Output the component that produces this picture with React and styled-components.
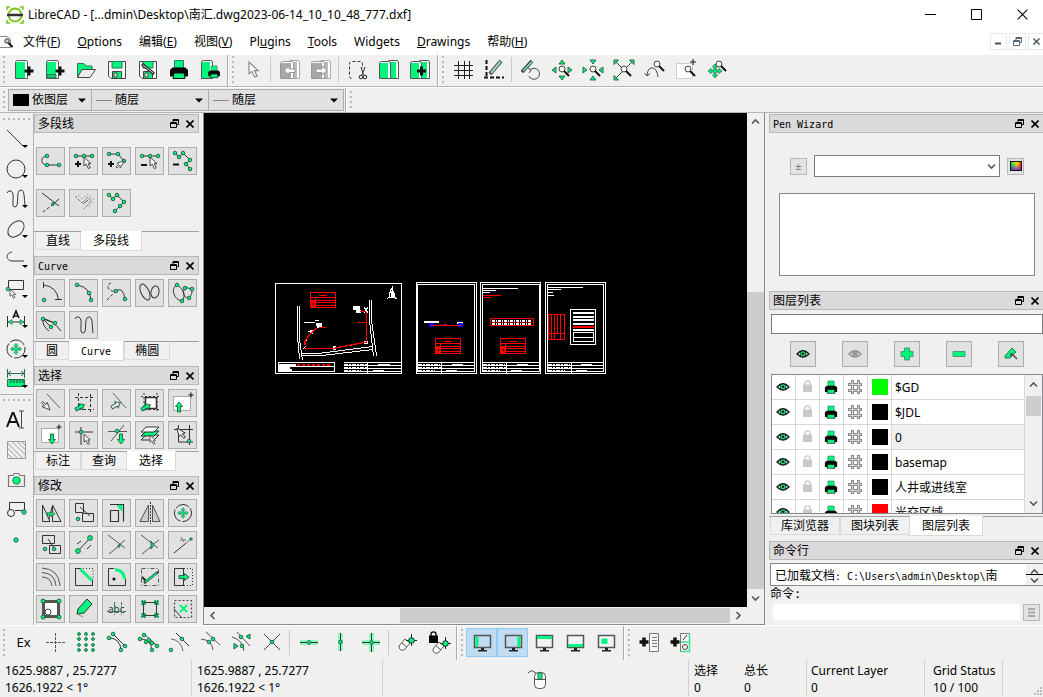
import { useState } from 'react';
import styled, { createGlobalStyle } from 'styled-components';

const GREEN = '#00f57c';
const INK = '#333';
const MONO = '"DejaVu Sans Mono", "Noto Sans CJK SC", monospace';

const GlobalStyle = createGlobalStyle`
    * { box-sizing: border-box; }
    body {
        margin: 0;
        background: #f0f0f0;
        color: #000;
        font: 12px/17px "Noto Sans", "Noto Sans CJK SC", sans-serif;
    }
    button, input, select { font: inherit; color: inherit; padding: 0; margin: 0; border-radius: 0; }
    svg { display: block; flex: none; }
`

/* ---------- icon helpers ---------- */

const Line = ({ d, c = INK, w = 1, f = 'none', dash }) =>
    <path d={d} stroke={c} strokeWidth={w} fill={f} strokeDasharray={dash} />

const Dots = ({ at, r = 1.8 }) => at.map(([x, y]) =>
    <circle key={`${x}-${y}`} cx={x} cy={y} r={r} fill={GREEN} stroke="#1d5c3c" strokeWidth="0.9" />)

const Cursor = ({ x, y, turn = 0, f = '#f4f4f4', c = INK, s = 1 }) => (
    <g transform={`translate(${x} ${y}) rotate(${turn}) scale(${s})`}>
        <path d="M0 0V9L2.2 7.2L4.4 11.6L6.2 10.7L4.2 6.6H7Z" fill={f} stroke={c} strokeWidth="0.9" />
    </g>
)

const Arrow = ({ x, y, turn = 0, f = GREEN, s = 1 }) => (
    <g transform={`translate(${x} ${y}) rotate(${turn}) scale(${s})`}>
        <path d="M0 -5L3.5 -0.5H1.5V5H-1.5V-0.5H-3.5Z" fill={f} stroke="#225c40" strokeWidth="0.9" />
    </g>
)

const Lens = ({ x = 14, y = 13, r = 3 }) => (
    <>
        <circle cx={x} cy={y} r={r} fill="#f8f8f8" stroke="#444" />
        <path d={`M${x + 2} ${y + 2}L${x + 7} ${y + 7}`} stroke="#111" strokeWidth="2" />
    </>
)

const Plus = ({ x, y, r = 3, w = 2, c = '#111' }) =>
    <path d={`M${x - r} ${y}H${x + r}M${x} ${y - r}V${y + r}`} stroke={c} strokeWidth={w} />

const FourWay = ({ x = 14, y = 14, s = 1 }) => (
    <g transform={`translate(${x} ${y}) scale(${s})`}>
        <path d="M0 -7L2.5 -4H1V-1H4V-2.5L7 0L4 2.5V1H1V4H2.5L0 7L-2.5 4H-1V1H-4V2.5L-7 0L-4 -2.5V-1H-1V-4H-2.5Z" fill={GREEN} stroke="#27835a" strokeWidth="0.9" />
    </g>
)

const Monitor = ({ children, f = '#f3f3f3' }) => (
    <>
        <path d="M6.500 7.500H22.500V19.500H6.500Z" fill={f} stroke="#555" strokeWidth="1.500" />
        {children}
        <path d="M13 20H16V22H19V23.500H10V22H13Z" fill="#222" />
    </>
)

/* sheet with a coloured face and a white turned edge */
const Page = ({ x = 5, y = 4, w = 13, f = GREEN, c = '#555' }) => (
    <>
        <path d={`M${x + 0.5} ${y + 2.5}Q${x + 0.5} ${y + 0.5} ${x + 2.5} ${y + 0.5}H${x + w - 2}Q${x + w - 0.5} ${y + 0.5} ${x + w - 0.5} ${y + 3}V22.500H${x + 0.5}Z`} fill="#fff" stroke={c} />
        <path d={`M${x + 1} ${y + 2}H${x + w - 3}V22H${x + 1}Z`} fill={f} />
    </>
)

const Floppy = () => (
    <>
        <path d="M5.500 5.500H22.500V22.500H8L5.500 20Z" fill="#f8f8f8" stroke="#444" />
        <path d="M9 5.500H19V12H9Z" fill={GREEN} stroke="#2b7d55" />
        <path d="M9.500 15.500H18.500V22.500H9.500Z" fill={GREEN} stroke="#444" />
        <path d="M11 17H14V21H11Z" fill="#eee" stroke="#444" />
    </>
)

const Printer = ({ x = 0, y = 0, s = 1 }) => (
    <g transform={`translate(${x} ${y}) scale(${s})`}>
        <path d="M9.500 4.500H18.500V12H9.500Z" fill={GREEN} stroke="#218455" />
        <path d="M5 14L7.500 11.500H20.500L23 14V20.500H5Z" fill="#080808" />
        <path d="M9 17H19L20 22.500H8Z" fill={GREEN} stroke="#111" />
    </g>
)

const Eraser = ({ x = 0, y = 0 }) => (
    <g transform={`translate(${x} ${y})`}>
        <path d="M4 18L10 11L15 15L9 22Q4 23 4 18Z" fill="#fff" stroke="#555" />
        <path d="M7 15L12 19" stroke="#555" />
        <path d="M16.500 6V18M11 12.500H22" stroke="#222" />
        <circle cx="16.500" cy="12.500" r="2.800" fill={GREEN} stroke="#222" />
    </g>
)

const Lock = ({ x = 0, y = 0, f = '#050505' }) => (
    <g transform={`translate(${x} ${y})`}>
        <path d="M2 5V3Q2 0.800 4.500 0.800Q7 0.800 7 3V5" fill="none" stroke={f} strokeWidth="1.300" />
        <path d="M0 4.500H9V12H0Z" fill={f} />
    </g>
)

const Eye = ({ f = GREEN, c = '#151515' }) => (
    <>
        <path d="M8 14Q14 7.500 20 14Q14 20 8 14Z" fill="#fff" stroke={c} strokeWidth="1.300" />
        <circle cx="14" cy="13.800" r="2.900" fill={f} stroke={c} strokeWidth="0.800" />
        <circle cx="14" cy="13.800" r="1.200" fill={c} />
    </>
)

const icons = {
    // file
    newDoc: <><Page x={5} /><Plus x={19} y={15} r={4.5} w={3} /></>,
    newTpl: <><Page x={5} /><Line d="M6 18.500H15V22H6Z" f="#19c873" c="#1b6b45" w={0.8} /><Plus x={19} y={15} r={4.5} w={3} /></>,
    open: <><Line d="M5.500 21.500V7.500H12L14 10H20V13" f={GREEN} c="#277a52" /><Line d="M5.500 21.500L10 13.500H23.500L18 21.500Z" f="#eee" c="#444" /></>,
    save: <Floppy />,
    saveAs: <><Floppy /><Line d="M8 8L20 18" c="#333" w={3} /><Line d="M9 9L19 17" c="#bcd" /></>,
    print: <Printer />,
    preview: <><Page x={5} w={12} /><Printer x={9} y={7} s={0.65} /></>,
    // edit
    pointer: <Cursor x={10} y={6} f="#fff" c="#888" s={1.3} />,
    undo: <><Page x={12} w={12} f="#bbb" c="#aaa" /><Page x={4} y={5} w={14} f="#a8a8a8" c="#999" /><Line d="M8 14.500L13 10V13H19V16.500H13V19Z" f="#fff" c="#999" /></>,
    redo: <><Page x={12} w={12} f="#bbb" c="#aaa" /><Page x={4} y={5} w={14} f="#a8a8a8" c="#999" /><Line d="M20 14.500L15 10V13H9V16.500H15V19Z" f="#fff" c="#999" /></>,
    cut: <><Line d="M7.500 22.500Q5.500 22.500 5.500 20V8Q5.500 5.500 8 5.500H16Q18.500 5.500 18.500 8V12" dash="3 2" /><Line d="M17 11L19.500 19M21 11L18 19" /><circle cx="17" cy="21" r="1.800" fill="none" stroke="#222" /><circle cx="21" cy="21" r="1.800" fill="none" stroke="#222" /></>,
    copy: <><Page x={12} w={12} /><Page x={4} y={5} w={12} /></>,
    paste: <><Page x={12} w={12} /><Page x={4} y={5} w={12} /><Plus x={15.5} y={15} r={4.5} w={3} /></>,
    // view
    grid: <Line d="M9.500 5V23M15.500 5V23M20.500 5V23M5 9.500H24M5 14.500H24M5 19.500H24" c="#222" />,
    draft: <><Line d="M6.500 4V20" c="#111" w={2} dash="4 2" /><Line d="M4 21.500H24" c="#111" w={2} dash="4 2" /><Line d="M10 18L21 5" c="#444" w={4} /><Line d="M11 17L20.500 5.500" c="#9fd8b8" w={2} /></>,
    redraw: <><Line d="M5 16L15 5" c="#333" w={3.4} /><Line d="M6 15L15 5.500" c="#7de6ae" w={1.8} /><path d="M13 14A5.500 5.500 0 1 1 12 20M11 12L14 14L12 17" fill="none" stroke="#444" /></>,
    zoomIn: <><Line d="M14 4L17 8H11ZM14 24L17 20H11ZM4 14L8 11V17ZM24 14L20 11V17Z" f={GREEN} c="#225c40" w={0.9} /><Lens /></>,
    zoomOut: <><Line d="M14 8L17 4H11ZM14 20L17 24H11ZM8 14L4 11V17ZM20 14L24 11V17Z" f={GREEN} c="#225c40" w={0.9} /><Lens /></>,
    zoomAuto: <><Line d="M6 6L12 12M22 6L16 12M6 22L12 16" /><Line d="M4 4H8.500L4 8.500ZM24 4H19.500L24 8.500ZM4 24H8.500L4 19.500Z" f={GREEN} c="#225c40" w={0.9} /><Lens /></>,
    zoomPrev: <><Lens x={16} y={8} /><Line d="M6 19Q7 11 12 12Q16 13 17 21M3.500 17L6 20L9 17.500" c="#444" /></>,
    zoomWin: <><Line d="M4.500 7.500H20.500V22.500H4.500Z" f="#fff" c="#ccc" /><Plus x={21} y={6} r={3} w={1} /><Lens x={16} y={13} /></>,
    pan: <><FourWay x={12} y={15} /><Lens x={16} y={8} /></>,
    // left tool column
    tLine: <Line d="M5 5L21 21" />,
    tCircle: <circle cx="14" cy="14" r="9" fill="none" stroke={INK} />,
    tSpline: <Line d="M5 8Q6 5 9 6C14 9 8 22 13 22C18 22 13 5 19 5C23 5 22 15 23 20" />,
    tEllipse: <ellipse cx="14" cy="14" rx="9.500" ry="6.500" transform="rotate(-45 14 14)" fill="none" stroke={INK} />,
    tArc: <Line d="M10 7C2 9 5 16 10 16H22" />,
    tSelect: <><Line d="M6.500 5.500H21.500V14.500H6.500Z" /><Dots at={[[6, 14]]} /><Cursor x={8} y={14} s={0.8} /></>,
    tDim: <><Line d="M5.500 11V22M22.500 11V22M6 17H22" /><Line d="M6 17L10 14.500V19.500ZM22 17L18 14.500V19.500Z" f={GREEN} c="#277a52" w={0.7} /><Line d="M11 13L14 6L17 13M12 11H16" c="#111" w={1.5} /></>,
    tMove: <><circle cx="14" cy="14" r="9" fill="none" stroke={INK} strokeDasharray="16 2" /><FourWay s={0.8} /></>,
    tRuler: <><Line d="M5.500 4V13M22.500 4V13M6 8.500H22M9 6L6 8.500L9 11M19 6L22 8.500L19 11" c="#236e4a" /><Line d="M5.500 14.500H22.500V21.500H5.500Z" f={GREEN} c="#237249" /><Line d="M9 15V18M12 15V18M15 15V18M18 15V18M21 15V18" /></>,
    tText: <><Line d="M5 21L10.500 7H11.500L17 21M7 16H15" c="#111" w={2} /><Line d="M17 5H19.500V22H17M19.500 5H22M19.500 22H22" c="#444" /></>,
    tHatch: <Line d="M5.500 5.500H23.500V22.500H5.500ZM5.500 17.500L10.500 22.500M5.500 12L16 22.500M5.500 7L21 22.500M10 5.500L23.500 19M15 5.500L23.500 14M19.500 5.500L23.500 9.500" c="#999" />,
    tCamera: <><Line d="M6.500 9.500H11L12 7.500H17L18 9.500H22.500V20.500H6.500Z" f="#eee" c="#777" w={1.2} /><circle cx="14.500" cy="14.500" r="3.800" fill={GREEN} stroke="#2d8058" /></>,
    tBlock: <><Line d="M7.500 14V6.500H22.500V14.500H13" /><circle cx="9" cy="17" r="3.500" fill="none" stroke={INK} /><Dots at={[[22, 16]]} r={2.2} /></>,
    tPoint: <Dots at={[[14, 14]]} r={2.2} />,
    // polyline dock
    plDraw: <><Line d="M10 9C3 9 3 18 10 18H22" /><Dots at={[[10, 9], [10, 18], [22, 18]]} /></>,
    plAdd: <><Line d="M6 9H22" /><Dots at={[[6, 9], [14, 9], [22, 9]]} /><Plus x={8} y={17} /><Cursor x={14} y={10} /></>,
    plAppend: <><Line d="M6 7H15L21 14" /><Dots at={[[6, 7], [15, 7], [21, 14]]} /><Plus x={8} y={17} /><Cursor x={21} y={14} turn={75} s={0.8} /></>,
    plDel: <><Line d="M6 9H22" /><Dots at={[[6, 9], [14, 9], [22, 9]]} /><Line d="M5 18H11" c="#111" w={2} /><Cursor x={14} y={10} /></>,
    plDelB: <><Line d="M6 6L10 10L14 6L21 13L17 17L21 22" /><Dots at={[[6, 6], [10, 10], [14, 6], [21, 13], [17, 17], [21, 22]]} /><Line d="M4 17.500H10" c="#111" w={2} /></>,
    plTrim: <><Line d="M5 4L22 17" /><Line d="M6 23L14 17" dash="3 2" /><Line d="M14 17L22 10" /><Dots at={[[16, 15]]} r={1.4} /></>,
    plPara: <><Line d="M5 7L12 14L18 8L21 12L14 20" c="#777" dash="3 1" /><Line d="M8 6L12 10L18 5L24 11L18 19" c="#999" dash="2 2" /><Line d="M13 15L18 11" c="#555" /></>,
    plSeg: <><Line d="M6 6L10 10L14 6L21 13L12 22" /><Dots at={[[6, 6], [10, 10], [14, 6], [21, 13], [17, 17], [12, 22]]} /></>,
    // curve dock
    cArc: <><Line d="M7 6Q20 8 21.500 20.500M6.500 3V9M18 20.500H25" /><Dots at={[[7, 21]]} /></>,
    c3p: <><Line d="M7 6Q20 8 21 21" /><Dots at={[[7, 6], [19, 14], [21, 21]]} /></>,
    cTan: <><Line d="M8 4Q3 6 6 10Q9 13 13 12M4 21L13 12" dash="3 2" /><Line d="M13 12Q20 7 22 20" /><Dots at={[[13, 12], [22, 20]]} /></>,
    cRings: <><ellipse cx="9" cy="13" rx="4" ry="8.500" transform="rotate(-25 9 13)" fill="none" stroke={INK} /><ellipse cx="19" cy="13" rx="4" ry="6" transform="rotate(10 19 13)" fill="none" stroke={INK} /></>,
    cRingDots: <><Line d="M8 6C1 9 5 21 13 22C18 17 13 8 8 6ZM16 9C12 15 17 20 20 19C26 12 22 8 16 9Z" /><Dots at={[[8, 6], [16, 9], [23, 10], [20, 19], [13, 22]]} /></>,
    cFan: <><Line d="M6 8Q5 15 12 20M6 8Q15 8 24 20M6 8L14 16M6 8L18 12" /><Dots at={[[6, 8], [18, 12], [14, 16]]} /></>,
    cSpline: <Line d="M5 8Q6 5 9 6C14 9 8 22 13 22C18 22 13 6 19 6C23 6 22 16 23 22" />,
    // select dock
    sEntity: <><Line d="M10 5L23 19" c="#666" /><Cursor x={13} y={21} turn={160} s={0.9} /></>,
    sWin: <><Line d="M8.500 4V20M20.500 5V24M5 8.500H24M8 20.500H24" dash="3 2" /><Arrow x={10} y={18} turn={60} /></>,
    sContour: <><Line d="M10 4L23 19" c="#666" /><Arrow x={13} y={16} turn={60} f="#eee" /></>,
    sWinSolid: <><Line d="M8 4V24M21 4V24M5 7.500H24M5 20.500H24" dash="2 2" /><Line d="M9.500 8.500H20.500V19.500H9.500Z" f="#fff" w={1.5} /><Arrow x={10} y={18} turn={60} /></>,
    sUp: <><Line d="M4.500 7.500H21.500V21.500H4.500Z" f="#fff" c="#aaa" /><Plus x={22} y={6} r={2.5} w={1} /><Arrow x={10} y={18} /></>,
    sDown: <><Line d="M4.500 7.500H21.500V21.500H4.500Z" f="#fff" c="#aaa" /><Plus x={22} y={6} r={2.5} w={1} /><Arrow x={15} y={18} turn={180} /></>,
    sCross: <><Line d="M5 11H23M11 6V24" /><Dots at={[[11, 11]]} /><Cursor x={14} y={13} s={0.9} /></>,
    sCrossDown: <><Line d="M5 10.500H24M21 4L8 20" c="#555" /><Dots at={[[14, 10]]} /><Arrow x={18} y={18} turn={180} /></>,
    sLayer: <><Line d="M5 19L10 14L23 14L18 19Z" f="#ddd" /><Line d="M5 15L10 10H23L18 15Z" f={GREEN} /><Line d="M5 11L10 6H23L18 11Z" f="#fff" /><Cursor x={14} y={14} s={0.8} /></>,
    sInvert: <><Line d="M9.500 4V21H24M20.500 4V24M5 8.500H24" /><Cursor x={8} y={7} s={1} turn={-12} /><Dots at={[[20, 20]]} /></>,
    // modify dock
    mMove: <><Line d="M5.500 6V22.500H13ZM15.500 6V22.500H24ZM15 8L12 20" /><Arrow x={14} y={15} turn={90} s={0.8} /></>,
    mCopy: <><Line d="M5.500 4.500H13.500V13.500H5.500ZM12.500 14.500H23.500V22.500H12.500ZM10 8L20 17" /><Dots at={[[8, 20]]} /></>,
    mScale: <><Line d="M7 5.500H20.500V22.500M7.500 11.500H15.500V22.500H7.500Z" w={1.2} /><Line d="M14 6.500H19V12Z" f={GREEN} c={GREEN} /></>,
    mMirror: <><Line d="M4 22.500L12.500 6V22.500ZM24 22.500L16.500 6V22.500Z" f="#ccc" c="#555" /><Line d="M14.500 3V25" dash="2 1" /></>,
    mRotate: <><circle cx="14" cy="14" r="8.500" fill="none" stroke={INK} strokeDasharray="14 2" /><FourWay s={0.75} /></>,
    mMoveRot: <><Line d="M5.500 4.500H17.500V12.500H5.500ZM12.500 14.500H23.500V22.500H12.500ZM11 8L17 17" /><Dots at={[[8, 18], [17, 18]]} /></>,
    mStretch: <><Line d="M8 20L20 7M7 13L11 10M21 14L17 18" /><Dots at={[[20, 7], [8, 20]]} r={2.4} /></>,
    mTrim: <><Line d="M5 4L22 17M16 14L22 9M6 23L16 15" c="#555" /><Dots at={[[16, 15]]} r={1.2} /></>,
    mTrim2: <><Line d="M5 4L22 17M16 14L23 9M6 23L16 15" c="#555" /><Line d="M15 10V18L18 14Z" f={GREEN} c="#225c40" w={0.9} /></>,
    mExtend: <><Line d="M5 22L16 13" /><Line d="M16 13L23 7" dash="2 1" /><Line d="M11 9H17M12 6L15 11" c="#777" /><Dots at={[[22, 8]]} r={1.2} /></>,
    mOffset: <Line d="M5 5Q22 6 23 23M5 9.500Q18 10 19 23M5 14Q14 14 15 23" c="#555" />,
    mBevel: <><Line d="M5.500 5V22.500H23M5 5.500H10M22.500 17V23" /><Line d="M10 5.500H23V17" dash="1 2" /><Line d="M10 6L22 17.500" c={GREEN} w={3} /></>,
    mFillet: <><Line d="M11 5.500H5.500V22.500H22.500V16" /><Line d="M12 6.500Q21 7 21.500 16" c={GREEN} w={3} /><circle cx="11" cy="16" r="1.600" fill="#111" /></>,
    mDivide: <><Line d="M5.500 5.500H22.500V22.500H5.500Z" dash="4 2 1 2" c="#555" /><Line d="M6 14L11 19M8 20L22 9" c="#333" w={2.4} /><Line d="M9 19L21 10" c={GREEN} w={1.5} /></>,
    mStretchBox: <><Line d="M14.500 5.500H5.500V22.500H14.500" /><Line d="M15 5.500H23.500V22.500H14.500" dash="1 2" /><Line d="M14.500 5V23" /><Arrow x={15} y={14} turn={90} /></>,
    mProps: <><Line d="M6.500 6.500H21.500V21.500H6.500Z" f="#fff" c="#555" w={3} /><circle cx="11" cy="17" r="3" fill="#fff" stroke="#444" /><Dots at={[[6, 6], [22, 6], [6, 22], [22, 22]]} r={2} /></>,
    mAttr: <><Line d="M8 14L17 4L22 9L14 18L7 19Z" f={GREEN} c="#333" /><Line d="M7 19L13 22" c="#888" /></>,
    mText: <><text x="5" y="18" fontSize="10" fill="#333">abc</text><Line d="M4 16.500H24M11.500 7V20M18.500 7V20" c="#387b5c" dash="3 1" /></>,
    mBlock: <><Line d="M7.500 7.500H20.500V20.500H7.500Z" /><Line d="M5.500 5.500L9.500 9.500M9.500 5.500L5.500 9.500M18.500 5.500L22.500 9.500M22.500 5.500L18.500 9.500M5.500 18.500L9.500 22.500M9.500 18.500L5.500 22.500M18.500 18.500L22.500 22.500M22.500 18.500L18.500 22.500" c="#07904d" w={1.8} /></>,
    mDelete: <><Line d="M5.500 5.500H22.500V22.500H5.500Z" dash="2 2" c="#444" w={1.2} /><Line d="M11 10L18 17M18 10L11 17" c={GREEN} w={2} /><Line d="M5 14L13 23" /></>,
    // snap bar
    sFree: <Line d="M14.500 5V24M5 14.500H24" dash="3 1" c="#555" />,
    sGrid: <Dots r={1.4} at={[7, 14, 21].flatMap(x => [6, 11, 17, 22].map(y => [x, y]))} />,
    sEnd: <><Line d="M10 6L22 18M6 10Q17 10 18 22" /><Dots at={[[10, 6], [22, 18], [6, 10], [18, 22]]} /></>,
    sOn: <><Line d="M10 6L23 18M6 11Q17 10 18 23" /><Dots at={[[10, 7], [15, 12], [18, 15], [23, 18], [6, 11], [12, 14], [18, 22]]} /></>,
    sCenter: <><Line d="M11 5L24 18" /><Line d="M6 11Q16 12 18 23" c="#666" /><Dots at={[[17, 11], [6, 22]]} /></>,
    sMid: <><Line d="M10 4L24 17M5 11Q16 12 17 22" c="#555" /><Dots at={[[17, 11], [13, 14]]} /></>,
    sDist: <><Line d="M10 4L23 18M5 9Q16 12 17 23" c="#555" /><Dots at={[[14, 9], [15, 18]]} /><Line d="M23 6V11L19 8.500ZM7 15.500V21L11 18Z" f={GREEN} c="#225c40" /></>,
    sInter: <><Line d="M6 6L22 22M22 6L6 22" c="#444" /><Dots at={[[14, 14]]} /></>,
    rHor: <><Line d="M5 14.500H23" c="#8df7c0" w={5} /><Line d="M5 14.500H23" /><Dots at={[[14, 14.5]]} /></>,
    rVer: <><Line d="M14.500 5V23" c="#8df7c0" w={5} /><Line d="M14.500 5V23" /><Dots at={[[14.5, 14]]} /></>,
    rOrt: <><Line d="M5 14.500H23M14.500 5V24" c="#8df7c0" w={5} /><Line d="M5 14.500H23M14.500 5V24" /><Dots at={[[14.5, 14.5]]} /></>,
    relZero: <Eraser x={1} />,
    lockZero: <><Eraser x={4} y={3} /><Lock x={4} y={3} /></>,
    dLeft: <Monitor f="none"><Line d="M9 8.500V18.500" c={GREEN} w={3} /></Monitor>,
    dRight: <Monitor f="none"><Line d="M20 8.500V18.500" c={GREEN} w={3} /></Monitor>,
    dTop: <Monitor><Line d="M7 9.500H22" c={GREEN} w={3} /></Monitor>,
    dBottom: <Monitor><Line d="M7 17.500H22" c={GREEN} w={3} /></Monitor>,
    dFloat: <Monitor><Line d="M10 11H15V15.500H10Z" c={GREEN} f={GREEN} /></Monitor>,
    addList: <><Plus x={9} y={14} r={4.5} w={3.5} /><Line d="M14.500 5.500H23.500V23.500H14.500ZM17 9.500H22M17 12.500H22M17 15.500H22M17 18.500H22" f="#f5f5f5" c="#777" /></>,
    addShapes: <><Plus x={9} y={14} r={4.5} w={3.5} /><Line d="M14.500 5.500H23.500V23.500H14.500Z" f="#f5f5f5" c="#777" /><Line d="M23.500 6V23.500H15M15 14H23" c="#39e58c" w={1.5} /><Line d="M17 12L21 7" /><circle cx="19" cy="19" r="2.500" fill="none" stroke="#444" /></>,
    // layer list
    eye: <Eye />,
    eyeOff: <Eye f="#aaa" c="#8c8c8c" />,
    add: <Line d="M11.500 8H16.500V11.500H20V16.500H16.500V20H11.500V16.500H8V11.500H11.500Z" f={GREEN} c="#4a9b76" />,
    remove: <Line d="M8 11.500H20V16.500H8Z" f={GREEN} c="#4a9b76" />,
    modify: <><Line d="M8 16L15 8L19 12L13 18H8Z" f={GREEN} c="#267b50" /><Line d="M14 13L20 19M14 13V17" c="#555" w={1.6} /></>,
    lock: <Lock x={10} y={7} f="#c8c8c8" />,
    printer: <Printer x={4.5} y={5} s={0.68} />,
    hash: <><Line d="M11.500 7V21M17.500 7V21M7 11.500H21M7 17.500H21" c="#8a8a8a" w={3} /><Line d="M11.500 8V20M17.500 8V20M8 11.500H20M8 17.500H20" c="#d4d4d4" w={1} /></>,
    mouse: <><Line d="M4 8Q8 4 10 7T16 7" c="#444" /><rect x="10.500" y="7.500" width="11" height="16" rx="4" fill="#fafafa" stroke="#555" /><Line d="M14 8H18V14H14Z" f={GREEN} c="#2b8157" /><Line d="M11 14.500H21" c="#555" /></>,
}

const Icon = ({ name }) => (
    <svg width="28" height="28" viewBox="0 0 28 28" aria-hidden="true">{icons[name]}</svg>
)

/* ---------- window frame ---------- */

const Window = styled.div`
    display: flex;
    flex-direction: column;
    height: 100vh;
    overflow: hidden;
`

const TitleBar = styled.header`
    display: flex;
    align-items: center;
    height: 29px;
    padding-left: 6px;
    gap: 4px;
    background: #fff;
`

const WindowTitle = styled.h1`
    flex: 1;
    margin: 0;
    font-size: 12px;
    font-weight: 400;
    white-space: nowrap;
`

const FrameButton = styled.button`
    display: flex;
    align-items: center;
    justify-content: center;
    width: ${props => props.$small ? 17 : 42}px;
    height: ${props => props.$small ? 17 : 28}px;
    border: ${props => props.$small ? '1px solid #e8e8e8' : 0};
    background: #fff;
`

const FrameButtons = styled.div`
    display: flex;
    gap: ${props => props.$small ? 2 : 4}px;
    margin-right: ${props => props.$small ? -2 : 0}px;
`

const MenuBar = styled.nav`
    display: flex;
    align-items: center;
    height: 25px;
    background: #fff;
`

const MenuItems = styled.div`
    display: flex;
    flex: 1;
    gap: 17px;
    padding-left: 9px;
`

const MenuItem = styled.button`
    border: 0;
    background: none;
    white-space: nowrap;
`

/* ---------- toolbars ---------- */

const ToolRow = styled.div`
    display: flex;
    flex: none;
    height: ${props => props.$height}px;
    border-top: 1px solid #fff;
    border-bottom: ${props => props.$flat ? 0 : '1px solid #b4b4b4'};
`

const ToolGroup = styled.div`
    display: flex;
    align-items: center;
    padding: 0 2px ${props => props.$tight ? 0 : 2}px 0;
    border-right: ${props => props.$last ? 0 : '1px solid #aaa'};
    box-shadow: ${props => props.$last ? 'none' : '1px 0 #fff'};
    margin-right: 1px;
`

const Grip = styled.div`
    flex: none;
    width: 2px;
    height: ${props => props.$short ? 19 : 27}px;
    margin: 0 3px;
    background: repeating-linear-gradient(#b8b8b8 0 2px, transparent 2px 5px);
`

const GripAcross = styled.div`
    flex: none;
    width: 27px;
    height: 2px;
    margin: 4px 3px;
    background: repeating-linear-gradient(90deg, #b8b8b8 0 2px, transparent 2px 5px);
`

const ToolButton = styled.button`
    display: flex;
    align-items: center;
    justify-content: center;
    width: 31px;
    height: 29px;
    border: 1px solid ${props => props.$on ? '#90c8f6' : 'transparent'};
    background: ${props => props.$on ? '#c0dcf3' : 'none'};
    font-size: 13px;
`

const ToolDivider = styled.div`
    width: 1px;
    height: 25px;
    margin: 0 3px 0 2px;
    background: #c8c8c8;
`

const PenBox = styled.label`
    display: flex;
    align-items: center;
    width: ${props => props.$width}px;
    height: 22px;
    margin-right: -1px;
    padding: 0 5px 0 4px;
    gap: 2px;
    border: 1px solid #adadad;
    background: #e1e1e1;
`

const PenSwatch = styled.span`
    width: 16px;
    height: ${props => props.$line ? 1 : 12}px;
    background: ${props => props.$line ? '#888' : '#000'};
`

const PenSelect = styled.select`
    flex: 1;
    min-width: 0;
    padding-left: 1px;
    border: 0;
    appearance: none;
    background: none;
    font: 12px/17px ${MONO};
`

/* ---------- main area ---------- */

const Main = styled.main`
    display: flex;
    flex: 1;
    min-height: 0;
`

const SideTools = styled.div`
    display: flex;
    flex-direction: column;
    flex: none;
    width: 34px;
    padding-top: 1px;
    border-right: 1px solid #b4b4b4;
`

const SideButton = styled.button`
    position: relative;
    display: flex;
    align-items: center;
    justify-content: center;
    height: 30px;
    padding-right: 1px;
    border: 0;
    background: none;
`

const DropMark = styled.span`
    position: absolute;
    right: 5px;
    bottom: 6px;
    border: 3px solid transparent;
    border-top-color: #000;
    border-bottom: 0;
`

const SideRule = styled.div`
    height: 1px;
    background: #b4b4b4;
`

const LeftDocks = styled.div`
    flex: none;
    width: 165px;
    padding-top: 1px;
`

const DockHeader = styled.header`
    display: flex;
    flex: none;
    align-items: center;
    height: 19px;
    padding-left: 3px;
    border: 1px solid #b8b8b8;
    background: #dadada;
`

const RightDocks = styled.div`
    display: flex;
    flex-direction: column;
    flex: none;
    width: 274px;
    margin-left: 4px;
    padding-top: 1px;

    ${DockHeader} { border-right: 0; }
`

const DockTitle = styled.h2`
    flex: 1;
    margin: 0;
    padding-top: 2px;
    font: ${props => props.$latin ? 10 : 12}px/17px ${MONO};
`

const DockButton = styled.button`
    display: flex;
    width: 16px;
    height: 16px;
    align-items: center;
    justify-content: center;
    border: 0;
    background: none;
`

const ButtonGrid = styled.div`
    display: grid;
    grid-template-columns: repeat(5, 29px);
    grid-auto-rows: 28px;
    gap: ${props => props.$gap}px 4px;
    padding: ${props => props.$gap}px 2px ${props => props.$gap === 4 ? 2 : props.$gap}px;
`

const GridButton = styled.button`
    display: flex;
    align-items: center;
    justify-content: center;
    border: 1px solid #adadad;
    background: #e1e1e1;
`

const TabBar = styled.div`
    display: flex;
    flex: none;
    height: 19px;
    margin-bottom: 6px;
    padding-left: 1px;
    border-top: 1px solid #a0a0a0;
`

const Tab = styled.button`
    height: ${props => props.$active ? 20 : 18}px;
    margin-top: ${props => props.$active ? -1 : 0}px;
    padding: 1px ${props => props.$active ? 12 : 10}px 0;
    border: 1px solid #d9d9d9;
    border-top: 0;
    border-left-width: ${props => props.$active ? 0 : 1}px;
    background: ${props => props.$active ? '#fff' : '#f0f0f0'};
    font: ${props => props.$latin ? 10 : 12}px/17px ${MONO};
    white-space: nowrap;
`

const Viewport = styled.section`
    display: grid;
    flex: 1;
    grid-template: 1fr 17px / 1fr 17px;
    min-width: 0;
    margin-left: 4px;
    border: 1px solid #828790;
    border-width: 0 1px 1px;
    background: #f0f0f0;
`

const Drawing = styled.svg`
    width: 100%;
    height: 100%;
    min-height: 0;
    background: #000;
`

const ScrollTrack = styled.div`
    display: flex;
    flex-direction: ${props => props.$vertical ? 'column' : 'row'};
    align-items: center;
    justify-content: space-between;
    padding: ${props => props.$vertical ? '4px 0' : '0 4px'};
    min-height: 0;
    background: ${props => props.$vertical
        ? 'linear-gradient(#cdcdcd, #cdcdcd) center 91% / 100% 297px no-repeat'
        : 'linear-gradient(#cdcdcd, #cdcdcd) 92% center / 330px 15px no-repeat'} #f0f0f0;
`

/* ---------- right docks ---------- */

const PenWizard = styled.div`
    display: flex;
    flex: none;
    flex-direction: column;
    gap: 16px;
    height: 158px;
    padding: 22px 8px 15px 10px;
`

const WizardRow = styled.div`
    display: flex;
    align-items: center;
    gap: 7px;
    padding: 0 11px;
`

const MiniButton = styled.button`
    display: flex;
    flex: none;
    align-items: center;
    justify-content: center;
    width: 17px;
    height: 17px;
    border: 1px solid #b8b8b8;
    background: #e3e3e3;
    color: #777;
    font-size: 11px;
    line-height: 12px;
`

const ComboShell = styled.label`
    display: flex;
    flex: 1;
    align-items: center;
    height: 22px;
    padding-right: 3px;
    border: 1px solid #7a7a7a;
    background: #fff;
`

const PlainSelect = styled.select`
    flex: 1;
    height: 100%;
    border: 0;
    appearance: none;
    background: none;
`

const Swatch = styled.span`
    width: 12px;
    height: 10px;
    border: 1px solid #111;
    background: linear-gradient(transparent 20%, rgba(90, 0, 255, 0.7)), linear-gradient(90deg, #00e05a, #ffe600 60%, #f30);
`

const FavoriteList = styled.div`
    flex: 1;
    border: 1px solid #828790;
    background: #fff;
`

const FilterInput = styled.input`
    flex: none;
    height: 20px;
    margin: 4px 0 7px 2px;
    border: 1px solid #7a7a7a;
    background: #fff;
`

const LayerActions = styled.div`
    display: flex;
    flex: none;
    justify-content: space-between;
    padding: 0 19px 7px 21px;
`

const ActionButton = styled.button`
    display: flex;
    align-items: center;
    justify-content: center;
    width: 26px;
    height: 26px;
    border: 1px solid #adadad;
    background: #e1e1e1;
`

const LayerBox = styled.div`
    display: flex;
    flex: 1;
    min-height: 0;
    margin: 0 0 2px 2px;
    border: 1px solid #828790;
    background: #fff;
    overflow: hidden;
`

const LayerTable = styled.table`
    flex: 1;
    width: 100%;
    min-width: 0;
    height: 150px;
    border-spacing: 0;
    table-layout: fixed;
`

const LayerCell = styled.td`
    width: ${props => props.$name ? 'auto' : '24px'};
    height: 25px;
    padding: 0 0 0 ${props => props.$name ? 3 : 0}px;
    border: solid #d8d8d8;
    border-width: 0 1px 1px 0;
    background: ${props => props.$current ? '#f0f0f0' : '#fff'};
    overflow: hidden;
    white-space: nowrap;

    svg { margin: -2px -3px; }
`

const ColorChip = styled.span`
    display: block;
    width: 16px;
    height: 16px;
    margin: 0 auto;
    background: ${props => props.$color};
`

const LayerScroll = styled.div`
    display: flex;
    flex: none;
    flex-direction: column;
    align-items: center;
    justify-content: space-between;
    width: 17px;
    padding: 5px 0;
    background: linear-gradient(#cdcdcd, #cdcdcd) 1px 21px / 15px 20px no-repeat #f0f0f0;
`

const LogBox = styled.div`
    display: flex;
    flex: none;
    height: 23px;
    margin: 3px 0 0 1px;
    padding-left: 4px;
    border: 1px solid #828790;
    border-right: 0;
    background: #fff;
    overflow: hidden;
`

const LogText = styled.p`
    flex: 1;
    margin: 0;
    padding-top: 4px;
    font: 12px/17px ${MONO};
    white-space: nowrap;
`

const Latin = styled.span`
    font-size: 10px;
`

const LogScroll = styled.div`
    display: flex;
    flex-direction: column;
    align-items: center;
    justify-content: space-between;
    width: 17px;
    padding: 3px 0 0;
    background: linear-gradient(#000, #000) 0 10px / 17px 1px no-repeat #f0f0f0;
`

const CommandLabel = styled.label`
    flex: none;
    height: 18px;
    padding-left: 1px;
    font: 12px/16px ${MONO};
`

const CommandRow = styled.div`
    display: flex;
    flex: none;
    gap: 3px;
    margin-bottom: 4px;
    padding: 0 3px 0 4px;
`

const CommandInput = styled.input`
    flex: 1;
    min-width: 0;
    height: 16px;
    border: 0;
    background: #fff;
`

/* ---------- status bar ---------- */

const StatusBar = styled.footer`
    display: flex;
    flex: none;
    align-items: stretch;
    height: 37px;
    padding-bottom: 1px;
`

const StatusCell = styled.div`
    display: flex;
    flex: ${props => props.$width ? `0 0 ${props.$width}px` : '1'};
    justify-content: ${props => props.$width ? 'flex-start' : 'center'};
    align-items: ${props => props.$width ? 'flex-start' : 'center'};
    padding-top: 2px;
    padding-left: ${props => props.$pad ?? 5}px;
    border-right: 1px solid #d0d0d0;
    white-space: nowrap;
`

const StatusText = styled.div`
    min-width: 50px;
    white-space: pre-line;
`

const SizeGrip = styled.div`
    display: flex;
    flex: 0 0 40px;
    align-items: flex-end;
    justify-content: flex-end;
`

/* ---------- small glyphs ---------- */

const Chevron = ({ turn = 0 }) => (
    <svg width="9" height="9" viewBox="0 0 9 9">
        <path d="M1 2.500L4.500 6L8 2.500" transform={`rotate(${turn} 4.500 4.500)`} fill="none" stroke="#555" strokeWidth="1.600" />
    </svg>
)

const Triangle = () => (
    <svg width="8" height="5" viewBox="0 0 8 5"><path d="M0 0.500H8L4 4.500Z" fill="#000" /></svg>
)

const RestoreGlyph = ({ c = '#000' }) => (
    <svg width="9" height="9" viewBox="0 0 9 9">
        <path d="M3 3V0.500H8.500V5.500H6.500M3 1.500H8.500" fill="none" stroke={c} />
        <path d="M0.500 3.500H6.500V8.500H0.500ZM0.500 4.500H6.500" fill="none" stroke={c} />
    </svg>
)

const CloseGlyph = ({ size = 8, w = 1.6, c = '#000' }) => (
    <svg width={size} height={size} viewBox="0 0 8 8">
        <path d="M0.500 0.500L7.500 7.500M7.500 0.500L0.500 7.500" stroke={c} strokeWidth={w} />
    </svg>
)

const Logo = () => (
    <svg width="18" height="18" viewBox="0 0 18 18">
        <circle cx="9" cy="9" r="6.500" fill="#fff" stroke="#7bc618" strokeWidth="2" />
        <path d="M1 4V1H4M14 1H17V4M1 14V17H4M14 17H17V14" fill="none" stroke="#7bc618" strokeWidth="1.500" />
        <path d="M1 9H17" stroke="#333" strokeWidth="2.500" />
    </svg>
)

const DocGlyph = () => (
    <svg width="14" height="14" viewBox="0 0 14 14">
        <path d="M0 1.500H7L10.500 4.500V12.500H0" fill="#fff" stroke="#888" />
        <circle cx="7" cy="6" r="2.200" fill="#ccc" stroke="#333" />
        <path d="M8.500 8L12.500 12" stroke="#111" strokeWidth="2" />
    </svg>
)

/* ---------- data ---------- */

const menus = [
    ['文件(', 'F', ')'], ['', 'O', 'ptions'], ['编辑(', 'E', ')'], ['视图(', 'V', ')'], ['Pl', 'u', 'gins'],
    ['', 'T', 'ools'], ['Widgets', '', ''], ['', 'D', 'rawings'], ['帮助(', 'H', ')'],
]

const topGroups = [
    ['newDoc', 'newTpl', 'open', 'save', 'saveAs', 'print', 'preview'],
    ['pointer', '|', 'undo', 'redo', '|', 'cut', 'copy', 'paste'],
    ['grid', 'draft', '|', 'redraw', 'zoomIn', 'zoomOut', 'zoomAuto', 'zoomPrev', 'zoomWin', 'pan'],
]

const bottomGroups = [
    ['Ex', 'sFree', 'sGrid', 'sEnd', 'sOn', 'sCenter', 'sMid', 'sDist', 'sInter', '|', 'rHor', 'rVer', 'rOrt', '|', 'relZero', 'lockZero'],
    ['dLeft', 'dRight', 'dTop', 'dBottom', 'dFloat'],
    ['addList', 'addShapes'],
]

const sideTools = ['tLine', 'tCircle', 'tSpline', 'tEllipse', 'tArc', 'tSelect', 'tDim', 'tMove', 'tRuler']
const sideExtras = ['tText', 'tHatch', 'tCamera', 'tBlock', 'tPoint']

const docks = [
    {
        title: '多段线', gap: 14, tabs: ['直线', '多段线'], active: 1,
        tools: ['plDraw', 'plAdd', 'plAppend', 'plDel', 'plDelB', 'plTrim', 'plPara', 'plSeg'],
    },
    {
        title: 'Curve', gap: 4, tabs: ['圆', 'Curve', '椭圆'], active: 1,
        tools: ['cArc', 'c3p', 'cTan', 'cRings', 'cRingDots', 'cFan', 'cSpline'],
    },
    {
        title: '选择', gap: 4, tabs: ['标注', '查询', '选择'], active: 2,
        tools: ['sEntity', 'sWin', 'sContour', 'sWinSolid', 'sUp', 'sDown', 'sCross', 'sCrossDown', 'sLayer', 'sInvert'],
    },
    {
        title: '修改', gap: 4, tabs: [],
        tools: ['mMove', 'mCopy', 'mScale', 'mMirror', 'mRotate', 'mMoveRot', 'mStretch', 'mTrim', 'mTrim2', 'mExtend',
            'mOffset', 'mBevel', 'mFillet', 'mDivide', 'mStretchBox', 'mProps', 'mAttr', 'mText', 'mBlock', 'mDelete'],
    },
]

const layers = [
    { name: '$GD', color: '#00ff00' },
    { name: '$JDL', color: '#000' },
    { name: '0', color: '#000' },
    { name: 'basemap', color: '#000' },
    { name: '人井或进线室', color: '#000' },
    { name: '光交区域', color: '#ff0000' },
]

/* ---------- pieces ---------- */

const isLatin = text => /^[\x00-\x7f]+$/.test(text)

const Tools = ({ groups }) => groups.map((group, i) => (
    <ToolGroup key={i} $last={i === groups.length - 1}>
        <Grip />
        {group.map((name, n) => name === '|'
            ? <ToolDivider key={n} />
            : <ToolButton key={n} type="button" $on={name === 'dLeft' || name === 'dRight'} aria-label={name}>
                {name === 'Ex' ? 'Ex' : <Icon name={name} />}
            </ToolButton>)}
    </ToolGroup>
))

const Header = ({ title }) => (
    <DockHeader>
        <DockTitle $latin={isLatin(title)}>{title}</DockTitle>
        <DockButton type="button" aria-label="float"><RestoreGlyph /></DockButton>
        <DockButton type="button" aria-label="close"><CloseGlyph /></DockButton>
    </DockHeader>
)

const Tabs = ({ tabs, start }) => {
    const [active, setActive] = useState(start);
    return (
        <TabBar>
            {tabs.map((tab, i) => (
                <Tab key={tab} type="button" $latin={isLatin(tab)} $active={active === i} onClick={() => setActive(i)}>{tab}</Tab>
            ))}
        </TabBar>
    )
}

const TitleBlock = ({ x, w }) => (
    <g>
        <path d={`M${x} 362.500H${x + w}M${x} 365.500H${x + w}M${x} 368.500H${x + w}M${x} 371.500H${x + w}M${x + w * 0.42} 362V373`} stroke="#fff" fill="none" />
        <path d={`M${x} 364H${x + w * 0.4}M${x} 367H${x + w * 0.42}M${x} 370H${x + w * 0.3}`} stroke="#fff" strokeDasharray="4 1 2 1" />
        <path d={`M${x + w * 0.6} 364H${x + w * 0.8}M${x + w * 0.5} 370H${x + w * 0.7}`} stroke="#fff" />
    </g>
)

const RedTable = ({ x, y }) => (
    <g stroke="#f00" fill="none">
        <path d={`M${x + 0.5} ${y + 0.5}h25v15h-25zM${x} ${y + 5.5}h26M${x} ${y + 8.5}h26M${x} ${y + 10.5}h26M${x} ${y + 13.5}h26M${x + 5.5} ${y + 5}v10`} />
        <path d={`M${x + 9} ${y + 3.5}h8M${x + 2} ${y + 9}h3v5h-3z`} strokeWidth="1.500" />
    </g>
)

const Plan = () => (
    <Drawing viewBox="204 113 543 494" preserveAspectRatio="xMidYMid meet" shapeRendering="crispEdges" role="img" aria-label="南汇">
        <g stroke="#fff" fill="none">
            <path d="M275.500 283.500H401.500V373.500H275.500Z" />
            <path d="M416.500 282.500H476.500V373.500H416.500ZM417.500 284.500H474.500V371.500H417.500Z" />
            <path d="M480.500 282.500H540.500V373.500H480.500ZM482.500 284.500H539.500V371.500H482.500Z" />
            <path d="M545.500 282.500H605.500V373.500H545.500ZM547.500 284.500H603.500V371.500H547.500Z" />
            <path d="M297.500 306V336L299.500 359M299.500 306V340L302.500 360M369.500 300V320L373.500 356M371.500 300V320L376.500 356" />
            <path d="M301 353.500H318L373 346.500M301 355.500H322L373 349.500" />
            <path d="M304 322.500H315M315 320.500H319M304 343L307 340M303 349L306 346M308 331H313" />
        </g>
        <path d="M316 323H322V328H317ZM353 306H360V310H353ZM356 310H361V313H356ZM310 330H313V334H310ZM333 346H336V350H333ZM364 341H368V344H364Z" fill="#fff" />
        <path d="M392.500 286V290L394.500 294V298M391.500 288L389.500 294V298M387 299L390 296M396.500 299L393 296M389 297.500H395M364 307L368 313M368 307L364 313" fill="none" stroke="#fff" />
        <path d="M392 289L394 293V297H391V293Z" fill="#fff" />
        <path d="M304 348.500H335M335 348L367 342M366.500 312V342M358 322.500H366M319 327.500H326M305 345V341L310 334L317 328M360 311.500H366" stroke="#f00" strokeWidth="1.300" fill="none" />
        <RedTable x={310} y={292} />
        <path d="M278.500 362.500H334.500V371.500H278.500ZM278 366.500H334" stroke="#fff" fill="none" />
        <path d="M279 365H296M279 368H290M279 370H292" stroke="#fff" strokeWidth="2" />
        <path d="M297 364.500H332" stroke="#f00" strokeWidth="2" strokeDasharray="3 2" />
        <TitleBlock x={344} w={57} />
        <TitleBlock x={418} w={56} />
        <TitleBlock x={483} w={56} />
        <TitleBlock x={548} w={55} />

        <path d="M424 322H439M457 322.500H463" stroke="#fff" strokeWidth="2" />
        <path d="M429 323H434V327H429ZM458 323H463V327H458Z" fill="#00f" />
        <path d="M431 325.500H461M444 324H447" stroke="#f00" fill="none" />
        <RedTable x={435} y={338} />

        <path d="M483 288.500H518M483 290.500H496M483 292.500H490M548 287.500H583M548 289.500H561M548 292.500H553M548 295.500H554" stroke="#fff" />
        <path d="M483 295.500H501M483 297.500H490" stroke="#f00" />
        <path d="M490.500 318.500H533.500V325.500H490.500Z" stroke="#f00" fill="none" />
        <path d="M492 320.500H532M492 323.500H532" stroke="#fff" strokeWidth="2" strokeDasharray="3 1 1 1" />
        <path d="M493 322H532" stroke="#f00" strokeDasharray="2 2" />
        <RedTable x={500} y={338} />

        <path d="M548.500 314.500H564.500V339.500H548.500ZM551.500 315V339M554.500 315V339M557.500 315V333M560.500 315V339M548 333.500H564" stroke="#f00" fill="none" />
        <path d="M570.500 309.500H595.500V344.500H570.500ZM573.500 332.500H593.500V341.500H573.500ZM573 337.500H593" stroke="#fff" fill="none" />
        <path d="M573 312.500H594M573 316.500H594M573 319.500H594M573 323.500H594M573 330H594" stroke="#fff" strokeWidth="2" />
        <path d="M573 326.500H594" stroke="#f00" strokeWidth="2" />
    </Drawing>
)

const App = () => {
    const [filter, setFilter] = useState('');
    const [command, setCommand] = useState('');

    const shown = layers.filter(layer => layer.name.includes(filter))

    return (
        <Window>
            <GlobalStyle />
            <TitleBar>
                <Logo />
                <WindowTitle>{'LibreCAD - [...dmin\\Desktop\\南汇.dwg2023-06-14_10_10_48_777.dxf]'}</WindowTitle>
                <FrameButtons>
                    <FrameButton type="button" aria-label="minimize"><svg width="11" height="11"><path d="M0 5.500H11" stroke="#000" /></svg></FrameButton>
                    <FrameButton type="button" aria-label="maximize"><svg width="11" height="11"><path d="M0.500 0.500H10.500V10.500H0.500Z" fill="none" stroke="#000" /></svg></FrameButton>
                    <FrameButton type="button" aria-label="close"><CloseGlyph size={11} w={0.8} /></FrameButton>
                </FrameButtons>
            </TitleBar>
            <MenuBar>
                <DocGlyph />
                <MenuItems>
                    {menus.map(([before, key, after]) => <MenuItem key={before + key} type="button">{before}<u>{key}</u>{after}</MenuItem>)}
                </MenuItems>
                <FrameButtons $small>
                    <FrameButton $small type="button" aria-label="minimize drawing"><svg width="7" height="7"><path d="M0 5.500H6" stroke="#456" strokeWidth="2" /></svg></FrameButton>
                    <FrameButton $small type="button" aria-label="restore drawing"><RestoreGlyph c="#567" /></FrameButton>
                    <FrameButton $small type="button" aria-label="close drawing"><CloseGlyph size={7} c="#456" /></FrameButton>
                </FrameButtons>
            </MenuBar>

            <ToolRow $height={33}><Tools groups={topGroups} /></ToolRow>
            <ToolRow $height={26}>
                <ToolGroup $tight>
                    <Grip $short />
                    <PenBox $width={84}>
                        <PenSwatch />
                        <PenSelect aria-label="color"><option>依图层</option></PenSelect>
                        <Triangle />
                    </PenBox>
                    <PenBox $width={118}>
                        <PenSwatch $line />
                        <PenSelect aria-label="width"><option>随层</option></PenSelect>
                        <Triangle />
                    </PenBox>
                    <PenBox $width={136}>
                        <PenSwatch $line />
                        <PenSelect aria-label="line type"><option>随层</option></PenSelect>
                        <Triangle />
                    </PenBox>
                </ToolGroup>
                <ToolGroup $tight $last><Grip $short /></ToolGroup>
            </ToolRow>

            <Main>
                <SideTools>
                    <GripAcross />
                    {sideTools.map(name => <SideButton key={name} type="button" aria-label={name}><Icon name={name} /><DropMark /></SideButton>)}
                    <SideRule />
                    <GripAcross />
                    {sideExtras.map(name => <SideButton key={name} type="button" aria-label={name}><Icon name={name} /></SideButton>)}
                </SideTools>

                <LeftDocks>
                    {docks.map(dock => (
                        <section key={dock.title}>
                            <Header title={dock.title} />
                            <ButtonGrid $gap={dock.gap}>
                                {dock.tools.map(name => <GridButton key={name} type="button" aria-label={name}><Icon name={name} /></GridButton>)}
                            </ButtonGrid>
                            {dock.tabs.length ? <Tabs tabs={dock.tabs} start={dock.active} /> : null}
                        </section>
                    ))}
                </LeftDocks>

                <Viewport>
                    <Plan />
                    <ScrollTrack $vertical><Chevron turn={180} /><Chevron /></ScrollTrack>
                    <ScrollTrack><Chevron turn={90} /><Chevron turn={-90} /></ScrollTrack>
                </Viewport>

                <RightDocks>
                    <Header title="Pen Wizard" />
                    <PenWizard>
                        <WizardRow>
                            <MiniButton type="button" disabled>±</MiniButton>
                            <ComboShell>
                                <PlainSelect aria-label="pen color" />
                                <Chevron />
                            </ComboShell>
                            <MiniButton type="button" aria-label="pick color"><Swatch /></MiniButton>
                        </WizardRow>
                        <FavoriteList />
                    </PenWizard>

                    <Header title="图层列表" />
                    <FilterInput aria-label="layer filter" value={filter} onChange={e => setFilter(e.target.value)} />
                    <LayerActions>
                        {['eye', 'eyeOff', 'add', 'remove', 'modify'].map(name => (
                            <ActionButton key={name} type="button" aria-label={name}><Icon name={name} /></ActionButton>
                        ))}
                    </LayerActions>
                    <LayerBox>
                        <LayerTable>
                            <tbody>
                                {shown.map(layer => (
                                    <tr key={layer.name}>
                                        {['eye', 'lock', 'printer', 'hash'].map(name => <LayerCell key={name}><Icon name={name} /></LayerCell>)}
                                        <LayerCell><ColorChip $color={layer.color} /></LayerCell>
                                        <LayerCell $name $current={layer.name === '0'}>{layer.name}</LayerCell>
                                    </tr>
                                ))}
                            </tbody>
                        </LayerTable>
                        <LayerScroll><Chevron turn={180} /><Chevron /></LayerScroll>
                    </LayerBox>
                    <Tabs tabs={['库浏览器', '图块列表', '图层列表']} start={2} />

                    <Header title="命令行" />
                    <LogBox>
                        <LogText>已加载文档<Latin>{': C:\\Users\\admin\\Desktop\\'}</Latin>南</LogText>
                        <LogScroll><Chevron turn={180} /><Chevron /></LogScroll>
                    </LogBox>
                    <CommandLabel htmlFor="command">命令:</CommandLabel>
                    <CommandRow>
                        <CommandInput id="command" value={command} onChange={e => setCommand(e.target.value)} />
                        <MiniButton type="button" aria-label="command options">
                            <svg width="7" height="9"><path d="M0 1H7M0 4.500H7M0 8H7" stroke="#aaa" strokeWidth="2" /></svg>
                        </MiniButton>
                    </CommandRow>
                </RightDocks>
            </Main>

            <ToolRow $height={35} $flat><Tools groups={bottomGroups} /></ToolRow>

            <StatusBar>
                <StatusCell $width={192}><StatusText>{'1625.9887 , 25.7277\n1626.1922 < 1°'}</StatusText></StatusCell>
                <StatusCell $width={191}><StatusText>{'1625.9887 , 25.7277\n1626.1922 < 1°'}</StatusText></StatusCell>
                <StatusCell><Icon name="mouse" /></StatusCell>
                <StatusCell $width={118}><StatusText>{'选择\n0'}</StatusText><StatusText>{'总长\n0'}</StatusText></StatusCell>
                <StatusCell $width={118} $pad={4}><StatusText>{'Current Layer\n0'}</StatusText></StatusCell>
                <StatusCell $width={78} $pad={8}><StatusText>{'Grid Status\n10 / 100'}</StatusText></StatusCell>
                <SizeGrip>
                    <svg width="10" height="10" fill="#bbb"><path d="M7 1H9V3H7ZM4 4H6V6H4ZM7 4H9V6H7ZM1 7H3V9H1ZM4 7H6V9H4ZM7 7H9V9H7Z" /></svg>
                </SizeGrip>
            </StatusBar>
        </Window>
    )
}

export default App;
